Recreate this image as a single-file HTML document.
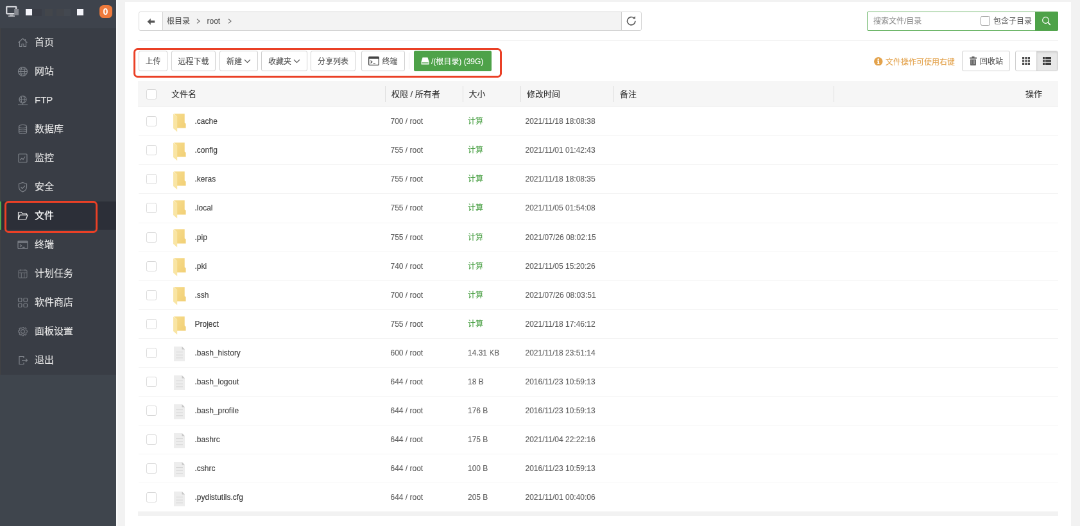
<!DOCTYPE html>
<html lang="zh-CN">
<head>
<meta charset="utf-8">
<title>文件管理</title>
<style>
*{box-sizing:border-box;margin:0;padding:0}
html,body{width:1080px;height:526px;overflow:hidden;background:#f2f2f2}
body{font-family:"Liberation Sans","Noto Sans CJK SC",sans-serif;font-size:12px;color:#4a4a4a}
#wrap{-webkit-text-stroke:.12px;will-change:transform;position:absolute;left:0;top:0;width:1683px;height:820px;transform:scale(0.64171);transform-origin:0 0;background:#f2f2f2;overflow:hidden}
.abs{position:absolute}
/* sidebar */
#side{position:absolute;left:0;top:0;width:180.6px;height:820px;background:#3f454d}
#shead{position:absolute;left:0;top:0;width:180.6px;height:44px;background:#3e434c}
#menu{position:absolute;left:0;top:44px;width:180.6px;height:540px;background:#393d45;list-style:none}
#menu li::before{content:"";position:absolute;left:0;top:0;width:1.4px;height:45px;background:#434344}
#menu li{position:relative;height:45px;line-height:44.3px;font-size:15px;color:#e6e6e6;padding-left:54px;white-space:nowrap}
#menu li svg{position:absolute;left:27px;top:14px;width:17px;height:17px;stroke:#7f838a;fill:none;stroke-width:1.2}
#menu li.on{background:linear-gradient(#2c2f38,#2c2f38) no-repeat 0 0/100% 44px;color:#fff}
#menu li.on::before{content:"";position:absolute;left:0;top:0;width:2px;height:44px;background:#50af50}
#menu li.on svg{stroke:#f0f0f0}
.sq{position:absolute;top:13.8px;width:10.2px;height:10.4px;background:#f4f4fa}
#badge{position:absolute;left:154.5px;top:8px;width:20px;height:20px;border-radius:6.3px;background:#ee7a3c;color:#fff;font-weight:bold;font-size:14px;line-height:20px;text-align:center}
.redbox{position:absolute;border:3px solid #ea4026;border-radius:6.5px}
/* main */
#panel{position:absolute;left:195.2px;top:3px;width:1473.7px;height:830px;background:#fff}
.bd{position:absolute;border:1px solid #d4d4d4;border-radius:3px;background:#fff}
.btn{position:absolute;top:79px;height:32px;border:1px solid #d0d0d0;border-radius:3px;background:#fff;line-height:32.4px;text-align:center;font-size:12px;color:#505050;white-space:nowrap}
.hr{position:absolute;left:215.4px;width:1433.6px;height:1px;background:#ededed}
#theadbg{position:absolute;left:215.4px;top:126.3px;width:1433.6px;height:41.1px;background:#f6f6f6;border-bottom:1px solid #f0f0f0}
#thead{position:absolute;left:216px;top:126.3px;width:1433px;height:41.1px}
#thead span{position:absolute;top:0;line-height:41.4px;font-size:13px;color:#333;white-space:nowrap}
#thead i{position:absolute;top:8px;height:25px;width:1px;background:#dedede}
.cb{position:absolute;left:12px;width:16px;height:16px;border:1px solid #d8d8d8;border-radius:2.5px;background:#fff}
#rows{position:absolute;left:216px;top:167.2px;width:1433px}
.r{position:relative;height:45.1px;border-bottom:1px solid #f4f4f4;line-height:44px;font-size:12px;color:#606060;white-space:nowrap}
.r .cb{top:14px}
.r span{position:absolute;top:0}
.r .n{left:87.5px;color:#3a3a3a}
.r .p{left:392.5px}
.r .s{left:513px}
.r .s.g{color:#4ea249}
.r .d{left:602.5px}
.r svg{position:absolute}
.r svg.fo{left:53.75px;top:9.66px;width:20px;height:29px}
.r svg.fi{left:55px;top:12.1px;width:17.2px;height:23.3px}
</style>
</head>
<body>
<div id="wrap">
<!-- SIDEBAR -->
<div id="side">
  <div id="shead">
    <svg class="abs" style="left:9px;top:9px;width:21px;height:18px" viewBox="0 0 21 18"><rect x="1.2" y="1.2" width="15" height="11" rx="1" fill="none" stroke="#d4d5da" stroke-width="2.4"/><rect x="6" y="13.5" width="6" height="2" fill="#b9bbc0"/><rect x="4" y="15.3" width="10" height="1.6" fill="#b9bbc0"/><rect x="13.2" y="5" width="6.8" height="9.6" fill="#85888f"/></svg>
    <div class="sq" style="left:40px"></div>
    <div class="abs" style="left:51px;top:14px;width:14px;height:10.5px;background:#3a3d46"></div>
    <div class="abs" style="left:70px;top:14px;width:12px;height:10.5px;background:#43464b"></div>
    <div class="abs" style="left:88px;top:14px;width:12px;height:10.5px;background:#42454b"></div>
    <div class="abs" style="left:100px;top:14px;width:10px;height:10.5px;background:#434850"></div>
    <div class="sq" style="left:120px"></div>
    <div id="badge">0</div>
  </div>
  <ul id="menu">
    <li><svg viewBox="0 0 17 17"><path d="M1.5 8.5 8.5 2l7 6.5M3.5 7.5v7h3.5v-4h3v4h3.5v-7M12.3 3v2.3"/></svg>首页</li>
    <li><svg viewBox="0 0 17 17"><circle cx="8.5" cy="8.5" r="7"/><ellipse cx="8.5" cy="8.5" rx="3" ry="7"/><path d="M1.5 8.5h14M2.5 5h12M2.5 12h12"/></svg>网站</li>
    <li><svg viewBox="0 0 17 17"><circle cx="8.5" cy="7" r="5.5"/><ellipse cx="8.5" cy="7" rx="2.4" ry="5.5"/><path d="M3 7h11M1 15h15M8.5 12.5v2.5"/></svg>FTP</li>
    <li><svg viewBox="0 0 17 17"><ellipse cx="8.5" cy="4" rx="6" ry="2.5"/><path d="M2.5 4v9c0 1.4 2.7 2.5 6 2.5s6-1.1 6-2.5V4M2.5 7c0 1.4 2.7 2.5 6 2.5s6-1.1 6-2.5M2.5 10c0 1.4 2.7 2.5 6 2.5s6-1.1 6-2.5"/></svg>数据库</li>
    <li><svg viewBox="0 0 17 17"><rect x="2" y="2" width="13" height="13" rx="1"/><path d="M4.5 11.5l2.5-3 2 2 3-4.5"/></svg>监控</li>
    <li><svg viewBox="0 0 17 17"><path d="M8.5 1.5l6 2v5c0 3.5-2.5 6-6 7.5-3.5-1.5-6-4-6-7.5v-5z"/><path d="M5.5 8.5l2.3 2.3 4-4.3"/></svg>安全</li>
    <li class="on"><svg viewBox="0 0 17 17"><path d="M1.5 14V3h5l1.5 2h6.5v2M1.5 14l2.5-7h12l-2.5 7z"/></svg>文件</li>
    <li><svg viewBox="0 0 17 17"><rect x="1" y="2.5" width="15" height="12" rx="1"/><path d="M1 4.8h15M1 3.8h15M4 8l2.5 2-2.5 2M8 12.3h3.5"/></svg>终端</li>
    <li><svg viewBox="0 0 17 17" style="stroke:#6a6e75"><rect x="2" y="3" width="13" height="12" rx="1.5"/><path d="M2 7h13M6.3 7v8M10.7 7v8M5 1.5v3M12 1.5v3"/></svg>计划任务</li>
    <li><svg viewBox="0 0 17 17"><rect x="1.5" y="1.5" width="5.5" height="5.5" rx="1.3"/><rect x="10" y="1.5" width="5.5" height="5.5" rx="1.3"/><rect x="1.5" y="10" width="5.5" height="5.5" rx="1.3"/><rect x="10" y="10" width="5.5" height="5.5" rx="1.3"/></svg>软件商店</li>
    <li><svg viewBox="0 0 17 17" style="stroke:#73777e"><circle cx="8.5" cy="8.5" r="2.9"/><path d="M15.41 7.4 15.41 9.6 13.85 9.78 13.19 11.37 14.16 12.61 12.61 14.16 11.37 13.19 9.78 13.85 9.6 15.41 7.4 15.41 7.22 13.85 5.63 13.19 4.39 14.16 2.84 12.61 3.81 11.37 3.15 9.78 1.59 9.6 1.59 7.4 3.15 7.22 3.81 5.63 2.84 4.39 4.39 2.84 5.63 3.81 7.22 3.15 7.4 1.59 9.6 1.59 9.78 3.15 11.37 3.81 12.61 2.84 14.16 4.39 13.19 5.63 13.85 7.22z" stroke-linejoin="round"/></svg>面板设置</li>
    <li><svg viewBox="0 0 17 17"><path d="M10 5V2.5H3v12h7V12M7 8.5h8.5M13 6l2.5 2.5L13 11"/></svg>退出</li>
  </ul>
  <div class="redbox" style="left:7.3px;top:313px;width:144.7px;height:50.3px"></div>
</div>

<!-- MAIN PANEL -->
<div class="abs" style="left:180.6px;top:0;width:2px;height:820px;background:#fbfbfb"></div>
<div id="panel"></div>

<!-- path bar -->
<div class="bd" style="left:216px;top:17.7px;width:784px;height:30px;background:#f3f3f3"></div>
<div class="abs" style="left:217px;top:18.7px;width:37px;height:28px;background:#fff;border-right:1px solid #cfcfcf;border-radius:2px 0 0 2px"></div>
<svg class="abs" style="left:228.5px;top:27.5px;width:13px;height:11.5px" viewBox="0 0 14 12"><path d="M6.2 0.5 0.7 6l5.5 5.5V8H13V4H6.2z" fill="#555"/></svg>
<div class="abs" style="left:260px;top:18px;line-height:30px;font-size:12px;color:#555;white-space:nowrap">根目录</div>
<svg class="abs" style="left:306px;top:29px;width:6px;height:8px" viewBox="0 0 6 8"><path d="M1 .7l4 3.3-4 3.3" fill="none" stroke="#666" stroke-width="1.1"/></svg>
<div class="abs" style="left:322.5px;top:18px;line-height:30px;font-size:12px;color:#555;white-space:nowrap">root</div>
<svg class="abs" style="left:355px;top:29px;width:6px;height:8px" viewBox="0 0 6 8"><path d="M1 .7l4 3.3-4 3.3" fill="none" stroke="#666" stroke-width="1.1"/></svg>
<div class="abs" style="left:967.7px;top:18.7px;width:31.3px;height:28px;background:#fff;border-left:1px solid #cfcfcf;border-radius:0 2px 2px 0"></div>
<svg class="abs" style="left:974.85px;top:23.95px;width:17.5px;height:17.5px" viewBox="0 0 15 15"><path d="M12.8 7.5a5.3 5.3 0 1 1-1.7-3.9" fill="none" stroke="#555" stroke-width="1.4"/><path d="M9.3 4.6h3.6V1z" fill="#555"/></svg>

<!-- search -->
<div class="abs" style="left:1351px;top:18px;width:298px;height:30px;border:1px solid #6db669;border-radius:2px;background:#fff"></div>
<div class="abs" style="left:1361px;top:18px;line-height:31px;font-size:12px;color:#8c8c8c;white-space:nowrap">搜索文件/目录</div>
<div class="cb" style="left:1527.5px;top:25px;width:15px;height:15px;border-color:#9a9a9a"></div>
<div class="abs" style="left:1548px;top:18px;line-height:31px;font-size:12px;color:#5a5a5a;-webkit-text-stroke:0;white-space:nowrap">包含子目录</div>
<div class="abs" style="left:1613px;top:18px;width:35.6px;height:30px;background:#4ea249;border-radius:0 2px 2px 0"></div>
<svg class="abs" style="left:1623px;top:25px;width:16px;height:16px" viewBox="0 0 16 16"><circle cx="6.5" cy="6.5" r="4.8" fill="none" stroke="#fff" stroke-width="1.2"/><path d="M10 10l3.3 3.3" stroke="#fff" stroke-width="1.7" stroke-linecap="round"/></svg>

<div class="hr" style="top:63px"></div>

<!-- toolbar -->
<div class="btn" style="left:216px;width:45px">上传</div>
<div class="btn" style="left:267px;width:69px">远程下载</div>
<div class="btn" style="left:342px;width:59.5px;text-align:left;padding-left:10px">新建<svg class="abs" style="left:37px;top:12px;width:11px;height:7px" viewBox="0 0 11 7"><path d="M1 1l4.5 4.5L10 1" fill="none" stroke="#555" stroke-width="1.2"/></svg></div>
<div class="btn" style="left:407px;width:71.5px;text-align:left;padding-left:10px">收藏夹<svg class="abs" style="left:49px;top:12px;width:11px;height:7px" viewBox="0 0 11 7"><path d="M1 1l4.5 4.5L10 1" fill="none" stroke="#555" stroke-width="1.2"/></svg></div>
<div class="btn" style="left:484px;width:70px">分享列表</div>
<div class="btn" style="left:563px;width:68px;text-align:left;padding-left:31.5px">终端<svg class="abs" style="left:10px;top:8px;width:17px;height:14px" viewBox="0 0 17 14"><rect x=".7" y=".7" width="15.6" height="12.6" rx="1" fill="none" stroke="#444" stroke-width="1.3"/><rect x=".7" y=".7" width="15.6" height="3" fill="#444"/><path d="M3.5 6.5l2.5 2-2.5 2M7.5 11h3.5" fill="none" stroke="#444" stroke-width="1.1"/></svg></div>
<div class="abs" style="left:636.5px;top:82px;width:1px;height:26px;background:#ececec"></div>
<div class="btn" style="left:645px;width:121px;background:#4ea249;border-color:#4ea249;color:#fff;text-align:left;padding-left:26px;border-radius:2px">/(根目录) (39G)<svg class="abs" style="left:10px;top:9px;width:13px;height:12px" viewBox="0 0 13 12"><path d="M2.5 0.5h8L12.5 7v4.5H.5V7z" fill="#fff"/><rect x="1.5" y="8.3" width="10" height="1.4" fill="#4ea249"/></svg></div>
<div class="redbox" style="left:208px;top:74.5px;width:574.3px;height:46px"></div>

<!-- right toolbar -->
<svg class="abs" style="left:1362px;top:88.5px;width:13.5px;height:13.5px" viewBox="0 0 14 14"><circle cx="7" cy="7" r="7" fill="#e3a24b"/><rect x="6" y="5.8" width="2.2" height="5.2" fill="#fff"/><circle cx="7" cy="3.6" r="1.3" fill="#fff"/><rect x="5.2" y="5.8" width="2" height="1.2" fill="#fff"/><rect x="5.2" y="10" width="3.8" height="1.2" fill="#fff"/></svg>
<div class="abs" style="left:1380px;top:80.5px;line-height:32px;font-size:12px;color:#e3a24b;white-space:nowrap">文件操作可使用右键</div>
<div class="btn" style="left:1499px;width:75px;text-align:left;padding-left:27px">回收站<svg class="abs" style="left:11px;top:8px;width:11px;height:14px" viewBox="0 0 11 14"><path d="M3.5 0h4v1.5H11v2H0v-2h3.5z" fill="#606060"/><path d="M1 4.5h9V13a1 1 0 0 1-1 1H2a1 1 0 0 1-1-1z" fill="#6a6a6a"/><path d="M3.5 6v6M5.5 6v6M7.5 6v6" stroke="#b0b0b0" stroke-width=".8"/></svg></div>
<div class="btn" style="left:1582px;width:67px"></div>
<div class="abs" style="left:1614.5px;top:80px;width:33.5px;height:30px;background:#e8e8e8;border-left:1px solid #d4d4d4;border-radius:0 2px 2px 0;box-shadow:inset 0 2px 3px rgba(0,0,0,.1)"></div>
<svg class="abs" style="left:1592.5px;top:89px;width:12px;height:12px" viewBox="0 0 12 12" fill="#4a4a4a"><rect x="0" y="0" width="3.2" height="3.2"/><rect x="4.4" y="0" width="3.2" height="3.2"/><rect x="8.8" y="0" width="3.2" height="3.2"/><rect x="0" y="4.4" width="3.2" height="3.2"/><rect x="4.4" y="4.4" width="3.2" height="3.2"/><rect x="8.8" y="4.4" width="3.2" height="3.2"/><rect x="0" y="8.8" width="3.2" height="3.2"/><rect x="4.4" y="8.8" width="3.2" height="3.2"/><rect x="8.8" y="8.8" width="3.2" height="3.2"/></svg>
<svg class="abs" style="left:1625px;top:89px;width:13px;height:12px" viewBox="0 0 13 12" fill="#3a3a3a"><rect x="0" y="0" width="3" height="3.2"/><rect x="4" y="0" width="9" height="3.2"/><rect x="0" y="4.4" width="3" height="3.2"/><rect x="4" y="4.4" width="9" height="3.2"/><rect x="0" y="8.8" width="3" height="3.2"/><rect x="4" y="8.8" width="9" height="3.2"/></svg>

<!-- table header -->
<div id="theadbg"></div>
<div id="thead">
  <div class="cb" style="top:12.5px"></div>
  <span style="left:51px">文件名</span>
  <i style="left:383.5px"></i><span style="left:394px">权限 / 所有者</span>
  <i style="left:504.5px"></i><span style="left:514.5px">大小</span>
  <i style="left:594.5px"></i><span style="left:605px">修改时间</span>
  <i style="left:739.5px"></i><span style="left:750px">备注</span>
  <i style="left:1082.5px"></i><span style="right:25px">操作</span>
</div>

<div id="rows">
<div class="r"><div class="cb"></div><svg class="fo" viewBox="0 0 20 29"><defs><linearGradient id="gG" x1="0" y1="0" x2="1" y2="0.6"><stop offset="0" stop-color="#f7dd8e"/><stop offset="1" stop-color="#f2d179"/></linearGradient></defs><path d="M0.8 0.2H17.7V14.6L19.6 15.8V22.6H6V5z" fill="url(#gG)"/><path d="M0 0.5L6.2 5V28.6L0 23z" fill="#f9e5a4"/></svg><span class="n">.cache</span><span class="p">700 / root</span><span class="s g">计算</span><span class="d">2021/11/18 18:08:38</span></div>
<div class="r"><div class="cb"></div><svg class="fo" viewBox="0 0 20 29"><path d="M0.8 0.2H17.7V14.6L19.6 15.8V22.6H6V5z" fill="url(#gG)"/><path d="M0 0.5L6.2 5V28.6L0 23z" fill="#f9e5a4"/></svg><span class="n">.config</span><span class="p">755 / root</span><span class="s g">计算</span><span class="d">2021/11/01 01:42:43</span></div>
<div class="r"><div class="cb"></div><svg class="fo" viewBox="0 0 20 29"><path d="M0.8 0.2H17.7V14.6L19.6 15.8V22.6H6V5z" fill="url(#gG)"/><path d="M0 0.5L6.2 5V28.6L0 23z" fill="#f9e5a4"/></svg><span class="n">.keras</span><span class="p">755 / root</span><span class="s g">计算</span><span class="d">2021/11/18 18:08:35</span></div>
<div class="r"><div class="cb"></div><svg class="fo" viewBox="0 0 20 29"><path d="M0.8 0.2H17.7V14.6L19.6 15.8V22.6H6V5z" fill="url(#gG)"/><path d="M0 0.5L6.2 5V28.6L0 23z" fill="#f9e5a4"/></svg><span class="n">.local</span><span class="p">755 / root</span><span class="s g">计算</span><span class="d">2021/11/05 01:54:08</span></div>
<div class="r"><div class="cb"></div><svg class="fo" viewBox="0 0 20 29"><path d="M0.8 0.2H17.7V14.6L19.6 15.8V22.6H6V5z" fill="url(#gG)"/><path d="M0 0.5L6.2 5V28.6L0 23z" fill="#f9e5a4"/></svg><span class="n">.pip</span><span class="p">755 / root</span><span class="s g">计算</span><span class="d">2021/07/26 08:02:15</span></div>
<div class="r"><div class="cb"></div><svg class="fo" viewBox="0 0 20 29"><path d="M0.8 0.2H17.7V14.6L19.6 15.8V22.6H6V5z" fill="url(#gG)"/><path d="M0 0.5L6.2 5V28.6L0 23z" fill="#f9e5a4"/></svg><span class="n">.pki</span><span class="p">740 / root</span><span class="s g">计算</span><span class="d">2021/11/05 15:20:26</span></div>
<div class="r"><div class="cb"></div><svg class="fo" viewBox="0 0 20 29"><path d="M0.8 0.2H17.7V14.6L19.6 15.8V22.6H6V5z" fill="url(#gG)"/><path d="M0 0.5L6.2 5V28.6L0 23z" fill="#f9e5a4"/></svg><span class="n">.ssh</span><span class="p">700 / root</span><span class="s g">计算</span><span class="d">2021/07/26 08:03:51</span></div>
<div class="r"><div class="cb"></div><svg class="fo" viewBox="0 0 20 29"><path d="M0.8 0.2H17.7V14.6L19.6 15.8V22.6H6V5z" fill="url(#gG)"/><path d="M0 0.5L6.2 5V28.6L0 23z" fill="#f9e5a4"/></svg><span class="n">Project</span><span class="p">755 / root</span><span class="s g">计算</span><span class="d">2021/11/18 17:46:12</span></div>
<div class="r"><div class="cb"></div><svg class="fi" viewBox="0 0 17.2 23.3"><path d="M0 0h12.6l4.6 4.6v18.7H0z" fill="#ededed"/><path d="M12.6 0l4.6 4.6h-4.6z" fill="#c6c6c6"/><path d="M3.2 8.55h10.8M3.2 13.2h10.8M3.2 17.75h10.8" stroke="#d6d6d6" stroke-width="1"/></svg><span class="n">.bash_history</span><span class="p">600 / root</span><span class="s">14.31 KB</span><span class="d">2021/11/18 23:51:14</span></div>
<div class="r"><div class="cb"></div><svg class="fi" viewBox="0 0 17.2 23.3"><path d="M0 0h12.6l4.6 4.6v18.7H0z" fill="#ededed"/><path d="M12.6 0l4.6 4.6h-4.6z" fill="#c6c6c6"/><path d="M3.2 8.55h10.8M3.2 13.2h10.8M3.2 17.75h10.8" stroke="#d6d6d6" stroke-width="1"/></svg><span class="n">.bash_logout</span><span class="p">644 / root</span><span class="s">18 B</span><span class="d">2016/11/23 10:59:13</span></div>
<div class="r"><div class="cb"></div><svg class="fi" viewBox="0 0 17.2 23.3"><path d="M0 0h12.6l4.6 4.6v18.7H0z" fill="#ededed"/><path d="M12.6 0l4.6 4.6h-4.6z" fill="#c6c6c6"/><path d="M3.2 8.55h10.8M3.2 13.2h10.8M3.2 17.75h10.8" stroke="#d6d6d6" stroke-width="1"/></svg><span class="n">.bash_profile</span><span class="p">644 / root</span><span class="s">176 B</span><span class="d">2016/11/23 10:59:13</span></div>
<div class="r"><div class="cb"></div><svg class="fi" viewBox="0 0 17.2 23.3"><path d="M0 0h12.6l4.6 4.6v18.7H0z" fill="#ededed"/><path d="M12.6 0l4.6 4.6h-4.6z" fill="#c6c6c6"/><path d="M3.2 8.55h10.8M3.2 13.2h10.8M3.2 17.75h10.8" stroke="#d6d6d6" stroke-width="1"/></svg><span class="n">.bashrc</span><span class="p">644 / root</span><span class="s">175 B</span><span class="d">2021/11/04 22:22:16</span></div>
<div class="r"><div class="cb"></div><svg class="fi" viewBox="0 0 17.2 23.3"><path d="M0 0h12.6l4.6 4.6v18.7H0z" fill="#ededed"/><path d="M12.6 0l4.6 4.6h-4.6z" fill="#c6c6c6"/><path d="M3.2 8.55h10.8M3.2 13.2h10.8M3.2 17.75h10.8" stroke="#d6d6d6" stroke-width="1"/></svg><span class="n">.cshrc</span><span class="p">644 / root</span><span class="s">100 B</span><span class="d">2016/11/23 10:59:13</span></div>
<div class="r"><div class="cb"></div><svg class="fi" viewBox="0 0 17.2 23.3"><path d="M0 0h12.6l4.6 4.6v18.7H0z" fill="#ededed"/><path d="M12.6 0l4.6 4.6h-4.6z" fill="#c6c6c6"/><path d="M3.2 8.55h10.8M3.2 13.2h10.8M3.2 17.75h10.8" stroke="#d6d6d6" stroke-width="1"/></svg><span class="n">.pydistutils.cfg</span><span class="p">644 / root</span><span class="s">205 B</span><span class="d">2021/11/01 00:40:06</span></div>
</div>
<div class="abs" style="left:215.4px;top:797px;width:1433.6px;height:6.6px;background:#f2f2f2"></div>
</div>
</body>
</html>
